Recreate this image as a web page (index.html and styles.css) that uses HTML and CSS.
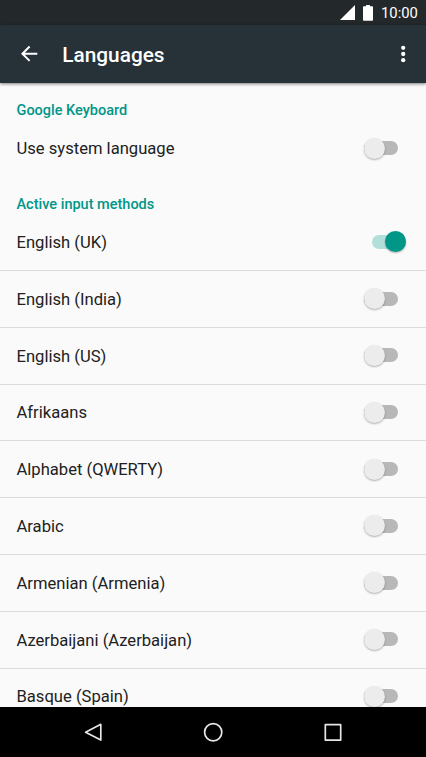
FILE: index.html
```html
<!DOCTYPE html>
<html lang="en">
<head>
<meta charset="utf-8">
<title>Languages</title>
<link rel="stylesheet" href="styles.css">
</head>
<body>
<div class="status">
  <svg class="signal" width="15" height="15" viewBox="0 0 15 15"><path d="M15 0v15H0z"/></svg>
  <svg class="battery" width="10" height="16" viewBox="0 0 10 16"><path d="M3 0h4v1.200h2.200a.8.8 0 0 1 .8.8v12.900a.8.8 0 0 1-.8.8H.8a.8.8 0 0 1-.8-.8V2a.8.8 0 0 1 .8-.8H3z"/></svg>
  <span class="clock">10:00</span>
</div>
<header class="toolbar">
  <svg class="back" width="17" height="16" viewBox="0 0 17 16"><path d="M16.300 7.700H1.400M8.600 .5L1.400 7.700l7.200 7.200"/></svg>
  <h1>Languages</h1>
  <svg class="more" width="6" height="18" viewBox="0 0 6 18"><circle cx="3.200" cy="2.800" r="2.150"/><circle cx="3.200" cy="9" r="2.150"/><circle cx="3.200" cy="15.200" r="2.150"/></svg>
</header>
<main>
  <h2>Google Keyboard</h2>
  <div class="row first"><span>Use system language</span><i class="switch"></i></div>
  <h2 class="second">Active input methods</h2>
  <div class="row"><span>English (UK)</span><i class="switch on"></i></div>
  <div class="row"><span>English (India)</span><i class="switch"></i></div>
  <div class="row"><span>English (US)</span><i class="switch"></i></div>
  <div class="row"><span>Afrikaans</span><i class="switch"></i></div>
  <div class="row"><span>Alphabet (QWERTY)</span><i class="switch"></i></div>
  <div class="row"><span>Arabic</span><i class="switch"></i></div>
  <div class="row"><span>Armenian (Armenia)</span><i class="switch"></i></div>
  <div class="row"><span>Azerbaijani (Azerbaijan)</span><i class="switch"></i></div>
  <div class="row"><span>Basque (Spain)</span><i class="switch"></i></div>
</main>
<nav>
  <svg width="20" height="22" viewBox="0 0 20 22"><path d="M17.800 3.300v15.800L2.600 11.200z"/></svg>
  <svg width="20" height="22" viewBox="0 0 20 22"><circle cx="10.200" cy="11.300" r="8.600"/></svg>
  <svg width="20" height="22" viewBox="0 0 20 22"><path d="M2.300 3.700h15.400v15.400H2.300z"/></svg>
</nav>
</body>
</html>
```
FILE: styles.css
```css
* { box-sizing: border-box; }
body {
  margin: 0;
  height: 757px;
  display: flex;
  flex-direction: column;
  overflow: hidden;
  background: #fafafa;
  color: #212121;
  font: 16.6px/20px Roboto, sans-serif;
}
.status {
  flex: none;
  height: 25px;
  padding: 0 8px 0 0;
  display: flex;
  justify-content: flex-end;
  align-items: center;
  background: #23282b;
  color: #fff;
}
.status svg { fill: #fff; }
.battery { margin: 0 8px 0 8px; }
.clock {
  width: 37px;
  font-size: 14.8px;
  white-space: nowrap;
}
.toolbar {
  flex: none;
  position: relative;
  height: 57.500px;
  padding: 0 20px 0 21px;
  display: flex;
  align-items: center;
  background: #263238;
  color: #fff;
  box-shadow: 0 1px 3px rgba(0, 0, 0, .5);
}
.back { fill: none; stroke: #fff; stroke-width: 2; }
h1 {
  flex: 1;
  margin: 2px 0 0 24.300px;
  font-size: 20.800px;
  line-height: 26px;
  font-weight: 500;
}
.more { fill: #fff; }
main { flex: 1; min-height: 0; overflow: hidden; }
h2 {
  margin: 0;
  padding: 18.500px 16.500px 0;
  height: 38px;
  color: #009688;
  font-size: 14.500px;
  line-height: 20px;
  font-weight: 500;
}
.second { height: 36.900px; padding-top: 18px; }
.row {
  height: 56.800px;
  padding: 2px 20px 0 16.500px;
  display: flex;
  align-items: center;
  justify-content: space-between;
  border-bottom: 1px solid #dcdcdc;
}
.first { border-bottom-color: transparent; }
.switch {
  position: relative;
  width: 34px;
  height: 14px;
  margin: -2.500px 7.700px 0 0;
  border-radius: 7px;
  background: #b8b8b8;
}
.switch::after {
  content: "";
  position: absolute;
  left: 0;
  top: -3.500px;
  width: 21px;
  height: 21px;
  border-radius: 50%;
  background: #ececec;
  box-shadow: 0 1px 2px rgba(0, 0, 0, .3);
}
.on { background: #b3dfdb; margin-right: .5px; }
.on::after { left: 13.500px; background: #009688; }
nav {
  flex: none;
  height: 50px;
  display: flex;
  justify-content: center;
  align-items: center;
  gap: 100px;
  background: #000;
}
nav svg { fill: none; stroke: #e6e6e6; stroke-width: 1.700; stroke-linejoin: round; }
```
